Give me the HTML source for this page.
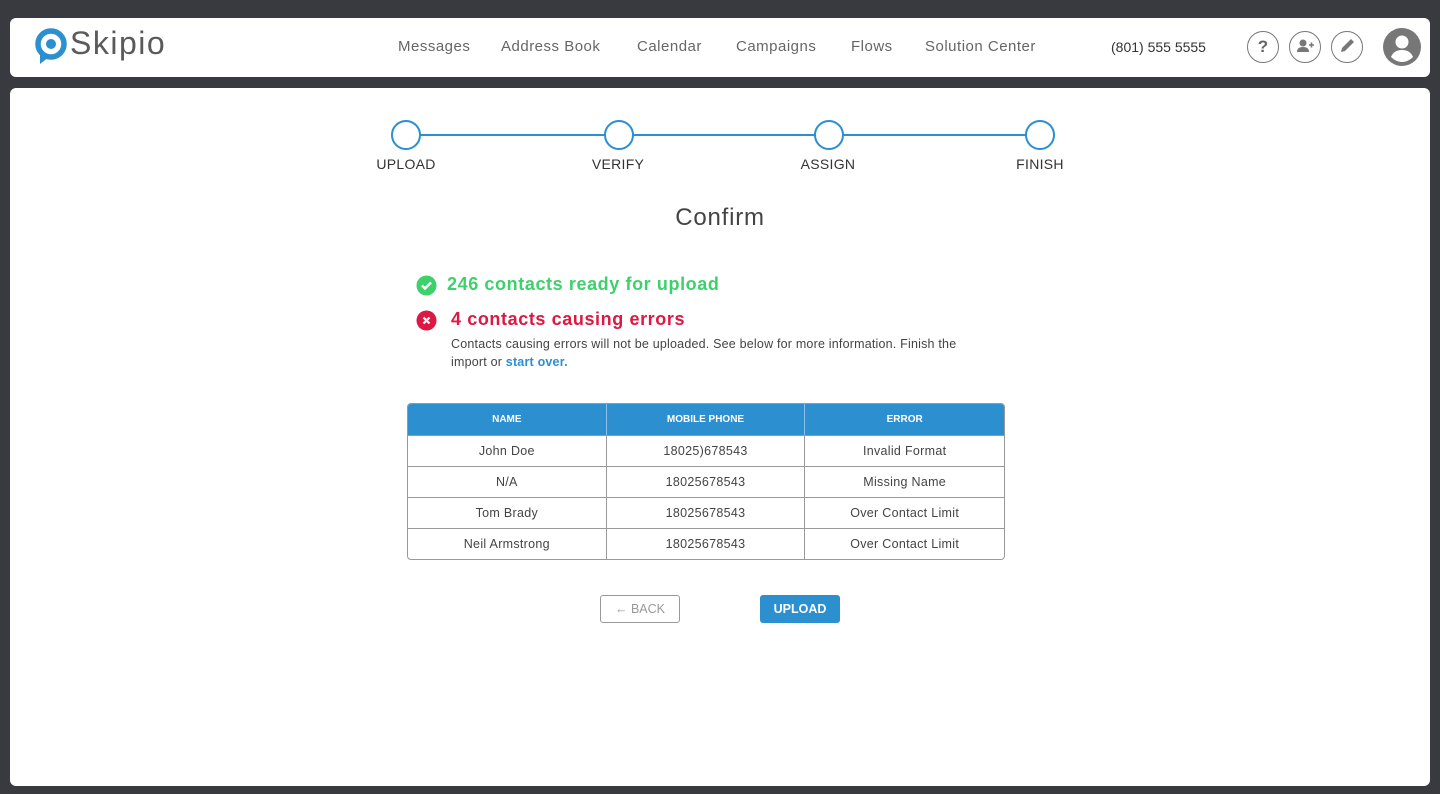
<!DOCTYPE html>
<html><head><meta charset="utf-8"><style>
*{box-sizing:border-box;margin:0;padding:0}
body{width:1440px;height:794px;background:#393a3f;font-family:"Liberation Sans",sans-serif;position:relative;overflow:hidden;color:#444}
.hdr{position:absolute;left:10px;top:18px;width:1420px;height:59px;background:#fff;border-radius:6px}
.main{position:absolute;left:10px;top:88px;width:1420px;height:698px;background:#fff;border-radius:6px}
.a{position:absolute;white-space:nowrap}
.nav{font-size:15px;color:#666;top:20px;letter-spacing:0.5px}
.ic{position:absolute;top:13px;width:32px;height:32px;border:1.5px solid #777;border-radius:50%}
.circ{position:absolute;top:32px;width:30px;height:30px;border:2px solid #2b8fd0;border-radius:50%;background:#fff}
.lbl{font-size:14px;color:#333;top:68px;transform:translateX(-50%);letter-spacing:0.3px}
table{position:absolute;left:397px;top:315px;width:598px;border-collapse:separate;border-spacing:0;border:1px solid #999;border-radius:4px;overflow:hidden;font-size:12.5px;color:#444;table-layout:fixed}
th{background:#2b8fd0;color:#fff;font-size:10px;font-weight:bold;height:31px;border-right:1px solid #8cc0e6;width:33.33%}
td{text-align:center;height:31px;border-top:1px solid #999;border-right:1px solid #999;letter-spacing:0.3px}
tr td:last-child,tr th:last-child{border-right:none}
</style></head><body>
<div class="hdr">
<svg class="a" style="left:25px;top:10px" width="34" height="38" viewBox="0 0 34 38"><circle cx="16" cy="16" r="13" fill="none" stroke="#2b8fd0" stroke-width="5.5"/><circle cx="16" cy="16" r="5" fill="#2b8fd0"/><path d="M5 24 L5 36 L14 29Z" fill="#2b8fd0"/></svg>
<div class="a" style="left:60px;top:7px;font-size:32px;color:#5a5a5a;letter-spacing:1.5px">Skipio</div>
<div class="a nav" style="left:388px">Messages</div>
<div class="a nav" style="left:491px">Address Book</div>
<div class="a nav" style="left:627px">Calendar</div>
<div class="a nav" style="left:726px">Campaigns</div>
<div class="a nav" style="left:841px">Flows</div>
<div class="a nav" style="left:915px">Solution Center</div>
<div class="a" style="left:1101px;top:21px;font-size:14px;color:#333">(801) 555 5555</div>
<div class="ic" style="left:1237px;text-align:center;font-weight:bold;color:#666;font-size:17px;line-height:29px">?</div>
<div class="ic" style="left:1279px"><svg width="29" height="29" viewBox="0 0 29 29"><circle cx="13" cy="11" r="3.5" fill="#777"/><path d="M7 20c0-4 3-5 6-5s6 1 6 5z" fill="#777"/><path d="M19 13h5M21.5 10.5v5" stroke="#777" stroke-width="1.6"/></svg></div>
<div class="ic" style="left:1321px"><svg width="29" height="29" viewBox="0 0 29 29"><path d="M9 20l1-4 9-9 3 3-9 9z" fill="#777"/></svg></div>
<svg class="a" style="left:1373px;top:10px" width="38" height="38" viewBox="0 0 38 38"><circle cx="19" cy="19" r="19" fill="#777"/><circle cx="19" cy="14" r="6.5" fill="#fff"/><path d="M8 29c2-5 6-7 11-7s9 2 11 7c-3 3-7 5-11 5s-8-2-11-5z" fill="#fff"/></svg>
</div>
<div class="main">
<div class="a" style="left:396px;top:46px;width:634px;height:2px;background:#2b8fd0"></div>
<div class="circ" style="left:381px"></div><div class="circ" style="left:594px"></div><div class="circ" style="left:804px"></div><div class="circ" style="left:1015px"></div>
<div class="a lbl" style="left:396px">UPLOAD</div><div class="a lbl" style="left:608px">VERIFY</div><div class="a lbl" style="left:818px">ASSIGN</div><div class="a lbl" style="left:1030px">FINISH</div>
<div class="a" style="left:0;width:1420px;text-align:center;top:116px;font-size:24px;color:#444;letter-spacing:0.8px">Confirm</div>
<svg class="a" style="left:406px;top:187px" width="21" height="21"><circle cx="10.5" cy="10.5" r="10" fill="#3dd16b"/><path d="M6 10.5l3 3 6-6" stroke="#fff" stroke-width="2.5" fill="none"/></svg>
<div class="a" style="left:437px;top:186px;font-size:18px;font-weight:bold;color:#3dd16b;letter-spacing:0.6px">246 contacts ready for upload</div>
<svg class="a" style="left:406px;top:222px" width="21" height="21"><circle cx="10.5" cy="10.5" r="10" fill="#dc1843"/><path d="M7.5 7.5l6 6M13.5 7.5l-6 6" stroke="#fff" stroke-width="2.2"/></svg>
<div class="a" style="left:441px;top:221px;font-size:18px;font-weight:bold;color:#dc1843;letter-spacing:0.6px">4 contacts causing errors</div>
<div class="a" style="left:441px;top:247px;font-size:12.5px;line-height:18px;color:#444;white-space:normal;width:540px;letter-spacing:0.2px">Contacts causing errors will not be uploaded. See below for more information. Finish the import or <b style="color:#2b8fd0">start over.</b></div>
<table><tr><th>NAME</th><th>MOBILE PHONE</th><th>ERROR</th></tr>
<tr><td>John Doe</td><td>18025)678543</td><td>Invalid Format</td></tr>
<tr><td>N/A</td><td>18025678543</td><td>Missing Name</td></tr>
<tr><td>Tom Brady</td><td>18025678543</td><td>Over Contact Limit</td></tr>
<tr><td>Neil Armstrong</td><td>18025678543</td><td>Over Contact Limit</td></tr></table>
<div class="a" style="left:590px;top:507px;width:80px;height:28px;border:1px solid #999;border-radius:3px;text-align:center;line-height:26px;font-size:12.5px;color:#999">← BACK</div>
<div class="a" style="left:750px;top:507px;width:80px;height:28px;background:#2b8fd0;border-radius:3px;text-align:center;line-height:28px;font-size:12.5px;color:#fff;font-weight:bold">UPLOAD</div>
</div>
</body></html>
